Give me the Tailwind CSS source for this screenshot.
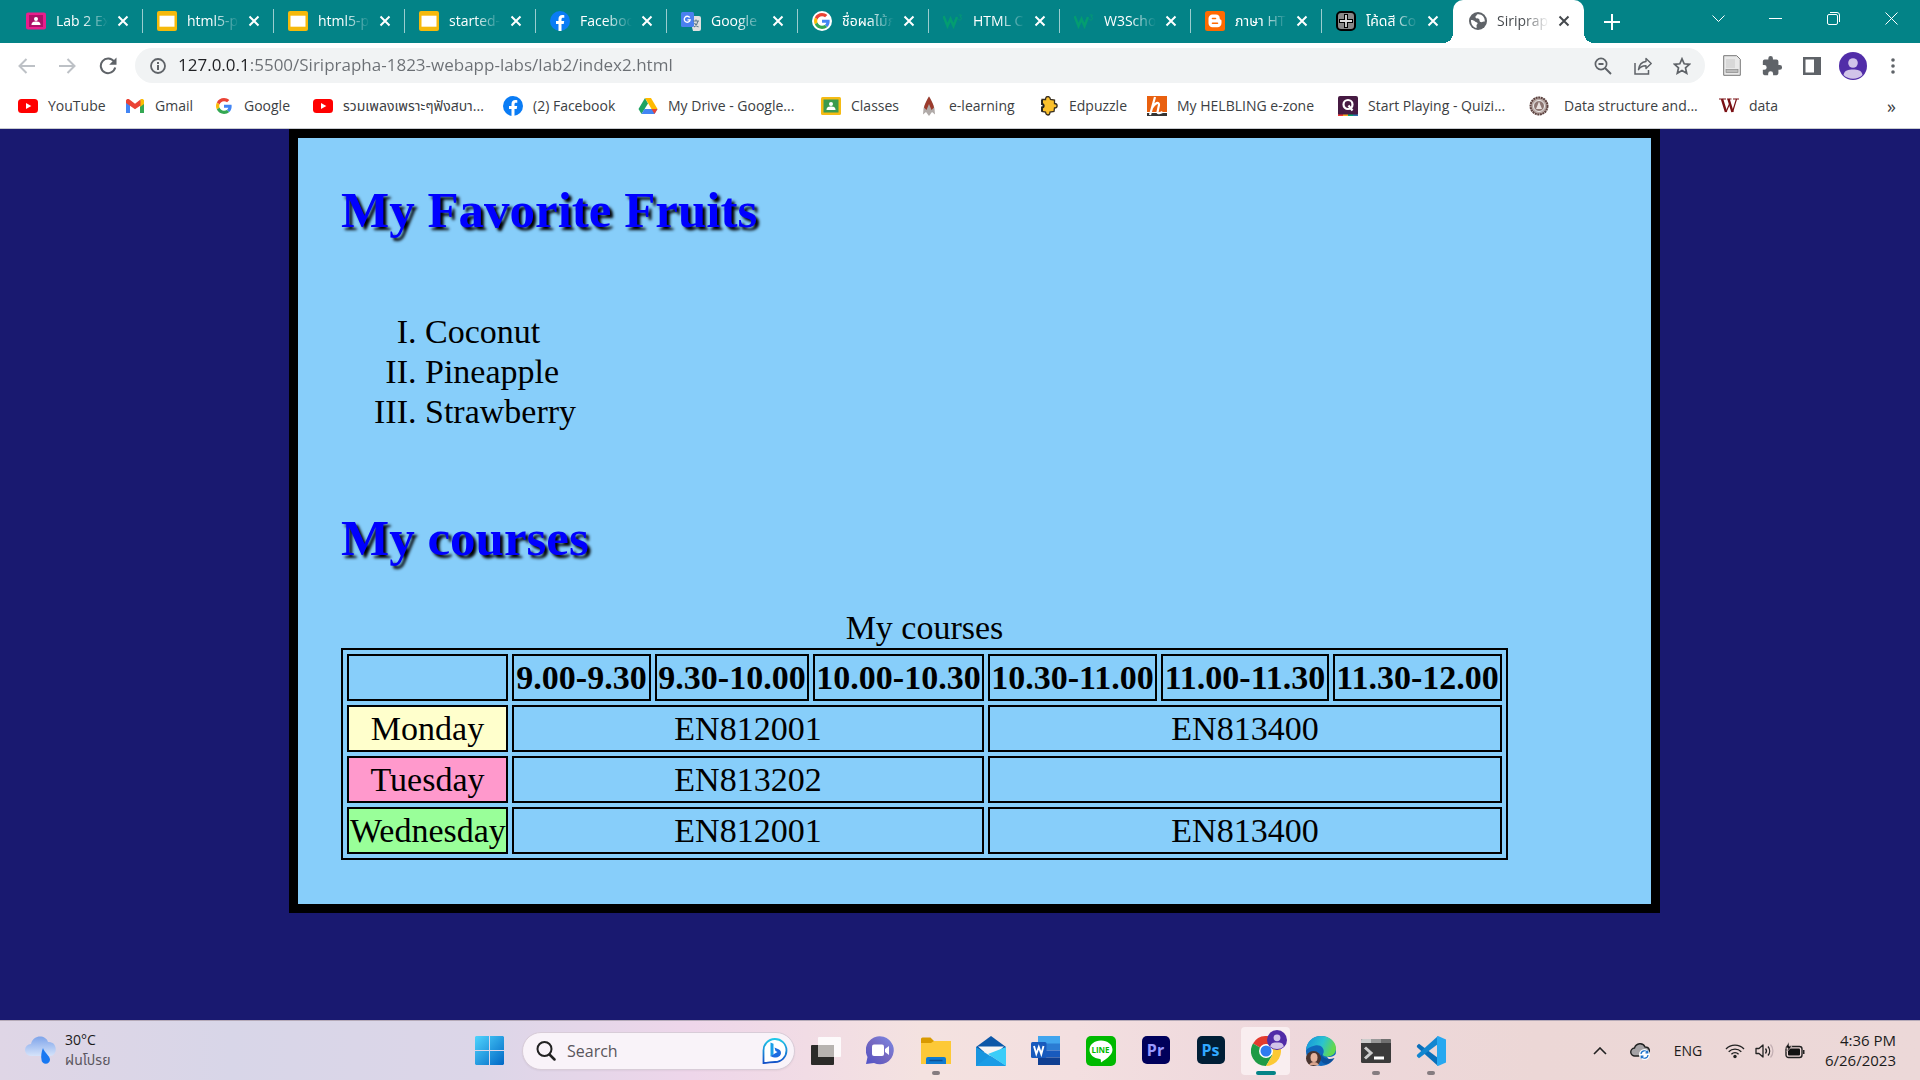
<!DOCTYPE html>
<html lang="th">
<head>
<meta charset="utf-8">
<title>Siriprapha</title>
<script src="https://cdn.jsdelivr.net/npm/@tailwindcss/browser@4"></script>
</head>
<body class="flex min-h-screen flex-col bg-[#191970] font-['Open_Sans','Noto_Sans_Thai',sans-serif] text-sm text-[#3c4043]">

<svg class="hidden" aria-hidden="true">
  <symbol id="x" viewBox="0 0 12 12"><path d="M1.5 1.5l9 9M10.500 1.500l-9 9" stroke="currentColor" stroke-width="2" fill="none"/></symbol>
  <symbol id="slides" viewBox="0 0 20 20"><rect width="20" height="20" rx="2" fill="#f5b90b"/><rect x="2.500" y="4.700" width="15" height="11" fill="#fff"/></symbol>
  <symbol id="fb" viewBox="0 0 20 20"><circle cx="10" cy="10" r="10" fill="#0a7cf5"/><path d="M8.500 20v-7H6v-3h2.500V8c0-2.600 1.500-4 3.800-4 .8 0 1.500.1 2 .2v2.500h-1.200c-1.200 0-1.600.7-1.600 1.500V10h2.700l-.5 3h-2.200v7z" fill="#fff"/></symbol>
  <symbol id="g" viewBox="0 0 48 48"><path fill="#EA4335" d="M24 9.500c3.500 0 6.700 1.200 9.200 3.600l6.900-6.900C35.900 2.400 30.500 0 24 0 14.600 0 6.500 5.400 2.600 13.200l8 6.200C12.400 13.700 17.700 9.500 24 9.500z"/><path fill="#4285F4" d="M47 24.500c0-1.600-.2-3.100-.4-4.500H24v9h12.900c-.6 3-2.200 5.500-4.700 7.200l7.700 6C44.400 38 47 31.800 47 24.500z"/><path fill="#FBBC05" d="M10.500 28.600c-.5-1.500-.8-3-.8-4.600s.3-3.100.8-4.600l-8-6.200C.9 16.500 0 20.100 0 24s.9 7.500 2.600 10.800z"/><path fill="#34A853" d="M24 48c6.500 0 11.900-2.100 15.900-5.800l-7.700-6c-2.200 1.500-4.900 2.300-8.200 2.300-6.300 0-11.600-4.200-13.500-9.900l-8 6.200C6.500 42.600 14.600 48 24 48z"/></symbol>
  <symbol id="w3" viewBox="0 0 20 20"><path d="M.500 5l4 10 3-7 3 7 3.500-9" stroke="#04a56a" stroke-width="2.500" fill="none" opacity=".75"/><path d="M15.500 4h3l-1.500 2c2 0 2 3-.2 3-.8 0-1.300-.4-1.500-.8" stroke="#04a56a" fill="none" opacity=".6"/></symbol>
  <symbol id="yt" viewBox="0 0 20 20"><rect y="3" width="20" height="14" rx="3.500" fill="#f00"/><path d="M8 7l5.300 3L8 13z" fill="#fff"/></symbol>
  <symbol id="person" viewBox="0 0 28 28"><circle cx="14" cy="14" r="14" fill="#512da8"/><circle cx="14" cy="11" r="4.800" fill="#d1c4e9"/><path d="M4.500 23c1-5 5-5.500 9.500-5.500s8.500.5 9.500 5.500a14 14 0 0 1-19 0z" fill="#d1c4e9"/></symbol>
</svg>

<header>
  <!-- tab strip -->
  <div class="flex h-[43px] items-center bg-[#038387] pl-3 text-white">
    <nav class="flex h-full shrink-0" aria-label="Tabs">
      <div class="flex w-[131px] items-center pb-px pl-[14px]"><svg class="size-5" viewBox="0 0 20 20"><rect y="1.500" width="20" height="17" rx="2" fill="#e91e8c"/><rect x="3" y="4" width="14" height="12" fill="#ad1068"/><circle cx="10" cy="8" r="2" fill="#fff"/><path d="M5.500 14c0-3 2-3.500 4.500-3.500s4.500.5 4.500 3.500z" fill="#fff"/></svg><a href="#" class="ml-[10px] w-[52px] overflow-hidden whitespace-nowrap mask-r-from-50%">Lab 2 Ex</a><button class="ml-[9px]" aria-label="Close"><svg class="size-3"><use href="#x"/></svg></button><span class="ml-auto h-6 w-px bg-white/60"></span></div>
      <div class="flex w-[131px] items-center pb-px pl-[14px]"><svg class="size-5"><use href="#slides"/></svg><a href="#" class="ml-[10px] w-[52px] overflow-hidden whitespace-nowrap mask-r-from-50%">html5-p</a><button class="ml-[9px]" aria-label="Close"><svg class="size-3"><use href="#x"/></svg></button><span class="ml-auto h-6 w-px bg-white/60"></span></div>
      <div class="flex w-[131px] items-center pb-px pl-[14px]"><svg class="size-5"><use href="#slides"/></svg><a href="#" class="ml-[10px] w-[52px] overflow-hidden whitespace-nowrap mask-r-from-50%">html5-p</a><button class="ml-[9px]" aria-label="Close"><svg class="size-3"><use href="#x"/></svg></button><span class="ml-auto h-6 w-px bg-white/60"></span></div>
      <div class="flex w-[131px] items-center pb-px pl-[14px]"><svg class="size-5"><use href="#slides"/></svg><a href="#" class="ml-[10px] w-[52px] overflow-hidden whitespace-nowrap mask-r-from-50%">started-</a><button class="ml-[9px]" aria-label="Close"><svg class="size-3"><use href="#x"/></svg></button><span class="ml-auto h-6 w-px bg-white/60"></span></div>
      <div class="flex w-[131px] items-center pb-px pl-[14px]"><svg class="size-5"><use href="#fb"/></svg><a href="#" class="ml-[10px] w-[52px] overflow-hidden whitespace-nowrap mask-r-from-50%">Faceboo</a><button class="ml-[9px]" aria-label="Close"><svg class="size-3"><use href="#x"/></svg></button><span class="ml-auto h-6 w-px bg-white/60"></span></div>
      <div class="flex w-[131px] items-center pb-px pl-[14px]"><svg class="size-5" viewBox="0 0 20 20"><path d="M8 5h10a2 2 0 0 1 2 2v11a2 2 0 0 1-2 2h-6z" fill="#e0e0e0"/><rect y="1" width="13" height="15" rx="1.500" fill="#4a80f0"/><path d="M8.700 6.500a3 3 0 1 0 .5 2.300H6.500" stroke="#fff" stroke-width="1.300" fill="none"/><path d="M12 10h6M15 8.500V10M17 10c-.5 3-2.500 5-4 6M13.500 12c1 2 2.500 3.500 4 4" stroke="#5f7a8c" stroke-width="1.200" fill="none"/></svg><a href="#" class="ml-[10px] w-[52px] overflow-hidden whitespace-nowrap mask-r-from-50%">Google</a><button class="ml-[9px]" aria-label="Close"><svg class="size-3"><use href="#x"/></svg></button><span class="ml-auto h-6 w-px bg-white/60"></span></div>
      <div class="flex w-[131px] items-center pb-px pl-[14px]"><span class="flex size-5 items-center justify-center rounded-full bg-white"><svg class="size-4"><use href="#g"/></svg></span><a href="#" class="ml-[10px] w-[52px] overflow-hidden whitespace-nowrap mask-r-from-50%">ชื่อผลไม้ภ</a><button class="ml-[9px]" aria-label="Close"><svg class="size-3"><use href="#x"/></svg></button><span class="ml-auto h-6 w-px bg-white/60"></span></div>
      <div class="flex w-[131px] items-center pb-px pl-[14px]"><svg class="size-5"><use href="#w3"/></svg><a href="#" class="ml-[10px] w-[52px] overflow-hidden whitespace-nowrap mask-r-from-50%">HTML C</a><button class="ml-[9px]" aria-label="Close"><svg class="size-3"><use href="#x"/></svg></button><span class="ml-auto h-6 w-px bg-white/60"></span></div>
      <div class="flex w-[131px] items-center pb-px pl-[14px]"><svg class="size-5"><use href="#w3"/></svg><a href="#" class="ml-[10px] w-[52px] overflow-hidden whitespace-nowrap mask-r-from-50%">W3Scho</a><button class="ml-[9px]" aria-label="Close"><svg class="size-3"><use href="#x"/></svg></button><span class="ml-auto h-6 w-px bg-white/60"></span></div>
      <div class="flex w-[131px] items-center pb-px pl-[14px]"><svg class="size-5" viewBox="0 0 20 20"><rect width="20" height="20" rx="2.500" fill="#ff6a00"/><path d="M7.500 3.500H11c2.300 0 3.700 1.500 3.700 3.500 0 1.500.4 1.500 1.300 1.800.4.200.5.500.5 1V12c0 2.500-1.600 4.200-4 4.200H7.500c-2.300 0-4-1.700-4-4V7.500c0-2.300 1.700-4 4-4z" fill="#fff"/><path d="M7.500 7.500h3M7.500 12.300h5" stroke="#ff6a00" stroke-width="1.600" stroke-linecap="round"/></svg><a href="#" class="ml-[10px] w-[52px] overflow-hidden whitespace-nowrap mask-r-from-50%">ภาษา HT</a><button class="ml-[9px]" aria-label="Close"><svg class="size-3"><use href="#x"/></svg></button><span class="ml-auto h-6 w-px bg-white/60"></span></div>
      <div class="flex w-[131px] items-center pb-px pl-[14px]"><svg class="size-5" viewBox="0 0 20 20"><rect x="1" y="1" width="18" height="18" rx="4" fill="#888" stroke="#000" stroke-width="2"/><path d="M10 3v14M3 10h14" stroke="#000" stroke-width="4"/><path d="M10 4v12M4 10h12" stroke="#ddd" stroke-width="1.800"/></svg><a href="#" class="ml-[10px] w-[52px] overflow-hidden whitespace-nowrap mask-r-from-50%">โค้ดสี Co</a><button class="ml-[9px]" aria-label="Close"><svg class="size-3"><use href="#x"/></svg></button></div>
      <div class="relative flex w-[131px] items-center rounded-t-[10px] bg-white pb-px pl-4 text-[#45494d]">
        <span class="absolute bottom-0 -left-[10px] size-[10px] bg-[radial-gradient(circle_at_0_0,transparent_10px,#fff_10px)]"></span>
        <span class="absolute -right-[10px] bottom-0 size-[10px] bg-[radial-gradient(circle_at_100%_0,transparent_10px,#fff_10px)]"></span>
        <svg class="size-[18px]" viewBox="0 0 18 18"><circle cx="9" cy="9" r="9" fill="#5f6368"/><path d="M2 8c2 0 3 .5 4 1.500s2 .5 2.500 1.500-1 1.500-1 2.500.5 1.500 0 2.500C4 15.500 1.800 12 2 8zM8 2.500c-.5 1.500-2 1.500-1.500 3s2.500.5 3.500 1.500 0 2.500 1.500 3 2.500-.5 4.300-.5C16 5 12.500 1.500 8 2.500z" fill="#fff"/></svg>
        <a href="#" class="ml-[10px] w-[52px] overflow-hidden whitespace-nowrap mask-r-from-50%">Siriprap</a><button class="ml-[9px]" aria-label="Close"><svg class="size-3"><use href="#x"/></svg></button>
      </div>
    </nav>
    <button class="ml-5" aria-label="New tab"><svg class="size-4" viewBox="0 0 16 16"><path d="M8 0v16M0 8h16" stroke="#fff" stroke-width="2"/></svg></button>
    <div class="mb-[6px] ml-auto flex h-8 shrink-0 text-white">
      <button class="flex w-[57px] items-center justify-center" aria-label="Search tabs"><svg class="h-[7px] w-[13px]" viewBox="0 0 13 7"><path d="M.500.500l6 6 6-6" stroke="#fff" fill="none"/></svg></button>
      <button class="flex w-[57px] items-center justify-center" aria-label="Minimize"><svg class="h-px w-[13px]"><rect width="13" height="1" fill="#fff"/></svg></button>
      <button class="flex w-[58px] items-center justify-center" aria-label="Restore"><svg class="size-[13px]" viewBox="0 0 13 13"><rect x=".500" y="2.500" width="10" height="10" rx="1.500" stroke="#fff" fill="none"/><path d="M3 .500h7a2.500 2.500 0 0 1 2.500 2.500v7" stroke="#fff" fill="none"/></svg></button>
      <button class="flex w-[58px] items-center justify-center" aria-label="Close window"><svg class="size-[13px]" viewBox="0 0 13 13"><path d="M.500.500l12 12M12.500.500l-12 12" stroke="#fff"/></svg></button>
    </div>
  </div>

  <!-- toolbar -->
  <div class="flex h-[45px] items-center bg-white text-[#5f6368]">
    <div class="flex w-[135px] shrink-0 items-center pl-[7px]">
      <button class="flex w-10 justify-center" aria-label="Back"><svg class="h-4 w-[18px]" viewBox="0 0 18 16"><path d="M17 8H2M8.500 1l-7 7 7 7" stroke="#bdc1c6" stroke-width="2" fill="none"/></svg></button>
      <button class="flex w-10 justify-center" aria-label="Forward"><svg class="h-4 w-[18px]" viewBox="0 0 18 16"><path d="M1 8h15M9.500 1l7 7-7 7" stroke="#bdc1c6" stroke-width="2" fill="none"/></svg></button>
      <button class="flex w-[41px] justify-center" aria-label="Reload"><svg class="size-[18px]" viewBox="0 0 18 18"><path d="M15 4.500A7.300 7.300 0 1 0 16.200 10.500" stroke="#5f6368" stroke-width="2" fill="none"/><path d="M17.500.500v7.300h-7.300z" fill="#5f6368"/></svg></button>
    </div>
    <div class="flex h-[35px] flex-1 items-center rounded-full bg-[#f1f3f4] pr-[10px] pl-[15px]">
      <svg class="size-4" viewBox="0 0 16 16"><circle cx="8" cy="8" r="7" stroke="#5f6368" stroke-width="1.800" fill="none"/><path d="M8 7v5M8 4v2" stroke="#5f6368" stroke-width="2"/></svg>
      <input aria-label="Address" value="127.0.0.1:5500/Siriprapha-1823-webapp-labs/lab2/index2.html" class="ml-3 flex-1 bg-[linear-gradient(90deg,#202124_71px,#6b6f74_71px)] bg-clip-text text-[17px] text-transparent outline-none">
      <button class="flex w-10 justify-center" aria-label="Zoom"><svg class="size-[18px]" viewBox="0 0 18 18"><circle cx="7" cy="7" r="5.600" stroke="#5f6368" stroke-width="1.700" fill="none"/><path d="M4.500 7h5M11 11l6 6" stroke="#5f6368" stroke-width="1.900"/></svg></button>
      <button class="flex w-10 justify-center" aria-label="Share"><svg class="size-[18px]" viewBox="0 0 18 18"><path d="M1 6v11h13.500v-4" stroke="#5f6368" stroke-width="1.500" fill="none"/><path d="M12 1.500l5.200 5-5.200 5V8.700c-3.500 0-6 1-7.500 4C5 8.500 7.500 5 12 4.500z" stroke="#5f6368" stroke-width="1.400" fill="none" stroke-linejoin="round"/></svg></button>
      <button class="ml-[6px] flex w-[26px] justify-center" aria-label="Bookmark"><svg class="size-[18px]" viewBox="0 0 18 18"><path d="M9 1.800l2.200 5 5.300.5-4 3.600 1.200 5.300L9 13.400l-4.700 2.800 1.200-5.300-4-3.600 5.300-.5z" stroke="#5f6368" stroke-width="1.700" fill="none"/></svg></button>
    </div>
    <div class="flex shrink-0 items-center pr-2 pl-[7px]">
      <button class="flex w-10 justify-center" aria-label="Document extension"><svg class="h-[21px] w-[18px]" viewBox="0 0 18 21"><path d="M.700.700h13l3.600 3.600v16H.700z" fill="#e9e9e9" stroke="#777"/><path d="M3 4h9v9H3z" fill="#d8d8d8"/><rect x="3" y="14.500" width="12" height="3" fill="#bbb" stroke="#888" stroke-width=".700"/></svg></button>
      <button class="flex w-10 justify-center" aria-label="Extensions"><svg class="size-[22px]" viewBox="0 0 24 24"><path fill="#5f6368" d="M20.500 11H19V7a2 2 0 0 0-2-2h-4V3.500a2.500 2.500 0 0 0-5 0V5H4a2 2 0 0 0-2 2v3.800h1.500a2.700 2.700 0 0 1 0 5.400H2V20c0 1.100.9 2 2 2h3.800v-1.500a2.700 2.700 0 0 1 5.400 0V22H17a2 2 0 0 0 2-2v-4h1.500a2.500 2.500 0 0 0 0-5z"/></svg></button>
      <button class="flex w-10 justify-center" aria-label="Side panel"><svg class="size-[18px]" viewBox="0 0 18 18"><path d="M0 0h18v18H0zM2.500 2.500v13H11v-13z" fill="#5f6368" fill-rule="evenodd"/></svg></button>
      <button class="flex w-[42px] justify-center" aria-label="Profile"><svg class="size-7"><use href="#person"/></svg></button>
      <button class="flex w-[38px] justify-center" aria-label="Menu"><svg class="h-4 w-1" viewBox="0 0 4 16"><circle cx="2" cy="2" r="1.800" fill="#5f6368"/><circle cx="2" cy="8" r="1.800" fill="#5f6368"/><circle cx="2" cy="14" r="1.800" fill="#5f6368"/></svg></button>
    </div>
  </div>

  <!-- bookmarks -->
  <nav aria-label="Bookmarks" class="grid h-[41px] grid-cols-[107px_89px_99px_190px_135px_183px_98px_120px_108px_191px_191px_190px_1fr_auto] items-center border-b border-[#c8cbd0] bg-white pr-6 pb-1 pl-[18px] whitespace-nowrap">
    <a href="#" class="flex items-center gap-[10px]"><svg class="size-5"><use href="#yt"/></svg>YouTube</a>
    <a href="#" class="flex items-center gap-[10px]"><svg class="size-5" viewBox="0 0 20 20"><path d="M1 4v13h4V8z" fill="#4285f4"/><path d="M19 4v13h-4V8z" fill="#34a853"/><path d="M15 5.500V11l4-3V5c0-2-2.200-2.500-3.500-1.500z" fill="#fbbc04"/><path d="M1 5c0-2 2.200-2.500 3.500-1.500L10 7.700l5.500-4.200V9.500L10 13.300 1 7z" fill="#ea4335"/></svg>Gmail</a>
    <a href="#" class="flex items-center gap-[10px]"><span class="flex size-5 items-center justify-center"><svg class="size-4"><use href="#g"/></svg></span>Google</a>
    <a href="#" class="flex items-center gap-[10px]"><svg class="size-5"><use href="#yt"/></svg>รวมเพลงเพราะๆฟังสบา...</a>
    <a href="#" class="flex items-center gap-[10px]"><svg class="size-5"><use href="#fb"/></svg>(2) Facebook</a>
    <a href="#" class="flex items-center gap-[10px]"><svg class="size-5" viewBox="0 0 20 20"><path d="M7 2l3 5.500L3.500 18 .500 13z" fill="#1ea362"/><path d="M7 2h6l6.500 11h-6z" fill="#ffba00"/><path d="M6.500 13h13l-3 5h-13z" fill="#4285f4"/><path d="M13.500 13h6l-3 5z" fill="#ea4335"/></svg>My Drive - Google...</a>
    <a href="#" class="flex items-center gap-[10px]"><svg class="size-5" viewBox="0 0 20 20"><rect y="1" width="20" height="18" rx="1.500" fill="#f5bb14"/><rect x="2.500" y="3.500" width="15" height="13" fill="#3c9a4e"/><circle cx="10" cy="8" r="2" fill="#fff"/><path d="M5.500 14c0-3 2-3.500 4.500-3.500s4.500.5 4.500 3.500z" fill="#fff"/></svg>Classes</a>
    <a href="#" class="flex items-center gap-[10px]"><svg class="size-5" viewBox="0 0 20 20"><path d="M10 .500c2 3 4.500 8 5.500 12l.500 6-3-2.500-3 4-3-4-3 2.500.500-6c1-4 3.500-9 5.500-12z" fill="#b0aaa8"/><path d="M10 .500c2 3 4 7 5 11L12.500 14 10 8l-2.500 6L5 11.500C6 7.500 8 3.500 10 .500z" fill="#9c3b2c"/></svg>e-learning</a>
    <a href="#" class="flex items-center gap-[10px]"><svg class="size-5" viewBox="0 0 20 20"><path d="M3 3.500l3.500 0c0-4 4.500-4 5 0l4 .500 0 3.500c3.500 0 3.500 4.500 0 4.500l-.500 3.500-4 .500c0 4-4 4-4.500 0L3 15.500v-4c2 0 2-3.500 0-3.500z" fill="#fbc12d" stroke="#3a3020" stroke-width="1.300"/><path d="M3 4v4c2.300 0 2.300 3.500 0 3.500v4" stroke="#222" stroke-width="1.800" fill="none"/></svg>Edpuzzle</a>
    <a href="#" class="flex items-center gap-[10px]"><svg class="size-5" viewBox="0 0 20 20"><path d="M0 0h20v16H0z" fill="#e9600f"/><path d="M0 17h20v3H0z" fill="#333"/><path d="M8 1L3 19M5 12c3-5 7-7 7-3l-1.500 7c0 2 3 1 5 0" stroke="#fff" stroke-width="2.200" fill="none"/></svg>My HELBLING e-zone</a>
    <a href="#" class="flex items-center gap-[10px]"><svg class="size-5" viewBox="0 0 20 20"><rect width="20" height="20" rx="2" fill="#461a42"/><circle cx="10" cy="8.500" r="4.500" stroke="#fff" stroke-width="2.200" fill="none"/><path d="M10.500 9.500l4 5" stroke="#fff" stroke-width="2.200"/><path d="M0 18.500h5V20H0z" fill="#e33"/><path d="M5 18.500h5V20H5z" fill="#f9a825"/><path d="M10 18.500h5V20h-5z" fill="#00a76d"/><path d="M15 18.500h5V20h-5z" fill="#2d70ae"/></svg>Start Playing - Quizi...</a>
    <a href="#" class="flex items-center gap-[15px]"><svg class="size-5" viewBox="0 0 20 20"><circle cx="10" cy="10" r="8.500" fill="#b8a8a4" stroke="#5d4340" stroke-width="2" stroke-dasharray="2 .6"/><circle cx="10" cy="10" r="5.500" fill="#8d7672" stroke="#eee"/><path d="M10 5.500l3 7.500H7z" fill="#e8e0de"/></svg>Data structure and...</a>
    <a href="#" class="flex items-center gap-[10px]"><svg class="size-5" viewBox="0 0 20 20"><path d="M0 3h7M8 3h4.500M14 3h6" stroke="#7a1014" stroke-width="1.200"/><path d="M3 3l4 13M9.500 3l4 13" stroke="#7a1014" stroke-width="2.500"/><path d="M7 16l4-9M13.500 16l4-13" stroke="#7a1014" stroke-width="1.200"/></svg>data</a>
    <button class="text-lg leading-5" aria-label="More bookmarks">»</button>
  </nav>
</header>

<main class="flex-1 font-['Liberation_Serif',serif] text-[34px] leading-10 text-black">
  <article class="mr-[260px] ml-[289px] border-9 border-black bg-[#87cefa] px-[43px] py-11">
    <h1 class="text-[51px] leading-14 font-bold text-[#00f] [text-shadow:3px_3px_3px_#000]">My Favorite Fruits</h1>
    <ol class="mt-[74px] list-[upper-roman] pl-21">
      <li>Coconut</li>
      <li>Pineapple</li>
      <li>Strawberry</li>
    </ol>
    <h1 class="mt-[78px] text-[51px] leading-14 font-bold text-[#00f] [text-shadow:3px_3px_3px_#000]">My courses</h1>
    <table class="mt-[42px] w-[1167px] table-fixed border-separate border-spacing-1 border-2 border-black text-center whitespace-nowrap">
      <caption>My courses</caption>
      <colgroup><col class="w-[161px]"><col class="w-[139px]"><col class="w-[154px]"><col class="w-[171px]"><col class="w-[169px]"><col class="w-[168px]"><col class="w-[169px]"></colgroup>
      <thead>
        <tr class="h-[47px]"><th class="border-2 border-black p-px"></th><th class="border-2 border-black p-px">9.00-9.30</th><th class="border-2 border-black p-px">9.30-10.00</th><th class="border-2 border-black p-px">10.00-10.30</th><th class="border-2 border-black p-px">10.30-11.00</th><th class="border-2 border-black p-px">11.00-11.30</th><th class="border-2 border-black p-px">11.30-12.00</th></tr>
      </thead>
      <tbody>
        <tr class="h-[47px]"><td class="border-2 border-black bg-[#ffffcc] p-px">Monday</td><td colspan="3" class="border-2 border-black p-px">EN812001</td><td colspan="3" class="border-2 border-black p-px">EN813400</td></tr>
        <tr class="h-[47px]"><td class="border-2 border-black bg-[#ff99cc] p-px">Tuesday</td><td colspan="3" class="border-2 border-black p-px">EN813202</td><td colspan="3" class="border-2 border-black p-px"></td></tr>
        <tr class="h-[47px]"><td class="border-2 border-black bg-[#99ff99] p-px">Wednesday</td><td colspan="3" class="border-2 border-black p-px">EN812001</td><td colspan="3" class="border-2 border-black p-px">EN813400</td></tr>
      </tbody>
    </table>
  </article>
</main>

<!-- taskbar -->
<footer class="grid h-[60px] grid-cols-[1fr_auto_1fr] items-center border-t border-[#b5aab8] bg-[linear-gradient(90deg,#dfd6e6_0%,#d8d6e8_12%,#dcd6e8_25%,#eed6ea_36%,#f4e2e0_48%,#f3dfe0_56%,#eed8dc_66%,#ecd7d6_80%,#ecd8d8_100%)] text-[#1b1b1b]">
  <button class="flex items-center gap-2 pb-px pl-[25px] text-left leading-5" aria-label="Weather">
    <svg class="h-7 w-8" viewBox="0 0 32 28"><defs><linearGradient id="cl" x2="0" y2="1"><stop stop-color="#7ea4ea"/><stop offset="1" stop-color="#d5e3fa"/></linearGradient></defs><path d="M6 20a6 6 0 0 1 0-12c2.500-10 15-9 17-2 10-1 10 14 2 14z" fill="url(#cl)"/><path d="M18 12c1 4 7 8 7 11.500a4 4 0 0 1-8.500 0c-.8-3 0-8 1.500-11.500z" fill="#1878f2"/></svg>
    <span>30°C<br><span class="text-[#5b5660]">ฝนโปรย</span></span>
  </button>

  <div class="flex h-full items-center">
    <button class="flex w-[55px] justify-center" aria-label="Start"><svg class="size-[29px]" viewBox="0 0 29 29"><defs><linearGradient id="wn" x2="1" y2="1"><stop stop-color="#4fd4fd"/><stop offset="1" stop-color="#0067c5"/></linearGradient></defs><path d="M1 0h13v14H0V1zM15 0h13l1 1v13H15zM0 15h14v14H1l-1-1zM15 15h14v13l-1 1H15z" fill="url(#wn)"/></svg></button>
    <label class="mr-[3px] ml-[5px] flex h-[38px] w-[273px] items-center rounded-full border border-[#d8ccd8] bg-[#f9f3f9] pr-[6px] pl-[13px] shadow-xs">
      <svg class="size-5" viewBox="0 0 20 20"><circle cx="8.500" cy="8" r="7" stroke="#222" stroke-width="2" fill="none"/><path d="M13.500 13.500l5 5" stroke="#222" stroke-width="2.500" stroke-linecap="round"/></svg>
      <input aria-label="Search" placeholder="Search" class="ml-[11px] w-0 flex-1 text-base placeholder-[#5a565c] outline-none">
      <svg class="size-[26px]" viewBox="0 0 26 26"><defs><linearGradient id="bg" x2="0" y2="1"><stop stop-color="#20c8e8"/><stop offset="1" stop-color="#1450c8"/></linearGradient></defs><path d="M1.500 25V13A11.500 11.500 0 1 1 13 24c-4 0-7 1-11.500 1z" fill="#fff" stroke="url(#bg)" stroke-width="1.800"/><path d="M8.500 4.500l3 1.300v10.500l-3 2.200z" fill="#1aa0e8"/><path d="M12.500 9.500l4.500 2c4 2.500 1.500 8-3 8-2 0-4-.5-5.500-1.500l7-4-2-1z" fill="#1a6ce0"/></svg>
    </label>
    <button class="flex w-[55px] justify-center" aria-label="Task view"><svg class="h-7 w-[30px]" viewBox="0 0 30 28"><rect y="8" width="23" height="20" rx="1" fill="#2b2b29"/><rect x="7" width="23" height="20" rx="1" fill="#fff" opacity=".85"/><path d="M7 8h16v12H7z" fill="#b7b3b0"/></svg></button>
    <button class="flex w-[55px] justify-center" aria-label="Chat"><svg class="size-[29px]" viewBox="0 0 29 29"><defs><linearGradient id="ch" x1="1" x2="0" y2="1"><stop stop-color="#7a8ae8"/><stop offset=".500" stop-color="#7568c0"/><stop offset="1" stop-color="#4f52c8"/></linearGradient></defs><path d="M0 28l1.500-7A14 14 0 1 1 8 27z" fill="url(#ch)"/><rect x="6" y="8.500" width="12" height="11.500" rx="2" fill="#fff"/><path d="M19 13l4-3v9l-4-3z" fill="#fff"/></svg></button>
    <button class="relative flex w-[55px] justify-center" aria-label="File Explorer"><svg class="h-[28px] w-[30px]" viewBox="0 0 30 28"><path d="M0 2a1.500 1.500 0 0 1 1.500-1.500h8L13 4H30v5H0z" fill="#d99a00"/><path d="M0 6h10l3-2h17v23H0z" fill="#fdc937"/><path d="M5 27v-5a2 2 0 0 1 2-2h16a2 2 0 0 1 2 2v5z" fill="#0f7bd0"/><path d="M8.500 23.500h13" stroke="#0a4f94" stroke-width="1.500"/></svg><span class="absolute -bottom-[10px] h-1 w-2 rounded-full bg-[#857c80]"></span></button>
    <button class="flex w-[55px] justify-center" aria-label="Mail"><svg class="size-[30px]" viewBox="0 0 30 30"><path d="M0 11L15 0l15 11v5H0z" fill="#0b57a8"/><path d="M2 10.500h26L15 22z" fill="#f6f4f4"/><path d="M0 11l30 19H0z" fill="#1895df"/><path d="M30 11v19L12 18z" fill="#3ccdf8"/><path d="M0 30l14-10.500L30 30z" fill="#1a9ce6"/></svg></button>
    <button class="flex w-[55px] justify-center" aria-label="Word"><svg class="size-[29px]" viewBox="0 0 29 29"><path d="M7 0h22v8H7z" fill="#41a5ee"/><path d="M7 7.500h22v7H7z" fill="#2b7cd3"/><path d="M7 14.500h22v7H7z" fill="#185abd"/><path d="M7 21.500h22V29H7z" fill="#103f91"/><rect y="6" width="15.500" height="16" rx="1.500" fill="#185abd"/><path d="M3 10l2.300 8 2.500-7 2.500 7 2.200-8" stroke="#fff" stroke-width="1.900" fill="none"/></svg></button>
    <button class="relative flex w-[55px] justify-center" aria-label="LINE"><svg class="size-[30px]" viewBox="0 0 30 30"><rect width="30" height="30" rx="5" fill="#00b900"/><path d="M15 4.500c6.500 0 11.500 4 11.500 9.300 0 4.200-4.500 8.400-11.500 12.700-.5-1.500.5-3.200-1-3.500C7.500 22.500 3.500 18.500 3.500 13.800 3.500 8.500 8.500 4.500 15 4.500z" fill="#fff"/></svg><span class="absolute top-[9px] text-[8px] leading-[10px] font-bold text-[#00b900]">LINE</span></button>
    <button class="flex w-[55px] justify-center"><span class="mb-[2px] flex size-7 items-center justify-center rounded-[5px] bg-[#00005b] text-base font-bold text-[#9999ff]">Pr</span></button>
    <button class="flex w-[55px] justify-center"><span class="mb-[2px] flex size-7 items-center justify-center rounded-[5px] bg-[#001e36] text-base font-bold text-[#31a8ff]">Ps</span></button>
    <button class="relative mx-[3px] flex h-12 w-[49px] items-center justify-center rounded-[4px] bg-[#f9eef0]" aria-label="Chrome"><svg class="size-[30px]" viewBox="0 0 30 30"><path d="M15 15L2 7.500A15 15 0 0 1 28 7.500z" fill="#e33b2e"/><path d="M15 15L2 7.500A15 15 0 0 0 15 30l6.500-11z" fill="#1e9b46"/><path d="M15 8h13.300A15 15 0 0 1 15 30l6.500-11z" fill="#fcc934"/><circle cx="15" cy="15" r="7" fill="#fff"/><circle cx="15" cy="15" r="5.500" fill="#2e7bf0"/></svg><svg class="absolute top-[3px] right-[3px] size-5"><use href="#person"/></svg><span class="absolute bottom-0 h-1 w-5 rounded-full bg-[#038387]"></span></button>
    <button class="flex w-[55px] justify-center" aria-label="Edge"><svg class="size-[30px]" viewBox="0 0 30 30"><defs><linearGradient id="ed" x2="1" y2=".3"><stop stop-color="#1490dc"/><stop offset=".600" stop-color="#2bc3d0"/><stop offset="1" stop-color="#62d84e"/></linearGradient></defs><circle cx="15" cy="15" r="15" fill="#1169bd"/><path d="M18 17c2 5 8 5 12 1v6l-5 2z" fill="#f0dadc"/><path d="M0 14C1 5 7 0 15 0c9 0 15 6 15 12.500 0 5-4 8-8.500 8-4 0-5.500-1.500-4-3.500C19 12 14 8 9 9.500 4 10.500 1 13 0 14z" fill="url(#ed)"/><path d="M15 18c2 5 8 6 13.500 4-1.500 3-4 5-7.500 6-5 0-8-5-6-10z" fill="#0b4f9c"/><circle cx="7.500" cy="22.500" r="7.500" fill="#4a3530"/><ellipse cx="8" cy="21.500" rx="3.500" ry="4.500" fill="#e5b49d"/><path d="M3 29c2-4 8-4 10 0z" fill="#d9a48c"/></svg></button>
    <button class="relative flex w-[55px] justify-center" aria-label="Terminal"><svg class="h-6 w-[30px]" viewBox="0 0 30 24"><rect width="30" height="24" rx="1.500" fill="#3b3b3b"/><path d="M0 4V1.500A1.500 1.500 0 0 1 1.500 0H10v4z" fill="#ccc"/><path d="M10 0h10v4H10z" fill="#999"/><path d="M20 0h8.500A1.500 1.500 0 0 1 30 1.500V4H20z" fill="#707070"/><path d="M4 8.500l6 5.500-6 5.500" stroke="#ccc" stroke-width="3" fill="none"/><path d="M13 19h10" stroke="#fff" stroke-width="3"/></svg><span class="absolute -bottom-3 h-1 w-2 rounded-full bg-[#857c80]"></span></button>
    <button class="relative flex w-[55px] justify-center" aria-label="Visual Studio Code"><svg class="size-[30px]" viewBox="0 0 30 30"><path d="M1 9.500l2-1.800L22 22v8L.800 11z" fill="#0a6fba"/><path d="M1 20.500l2 1.800L22 8V0L.800 19z" fill="#1286d0"/><path d="M22 0l8 3.500v23L22 30l-1-1V1z" fill="#27a8f0"/></svg><span class="absolute -bottom-[9px] h-1 w-2 rounded-full bg-[#857c80]"></span></button>
  </div>

  <div class="flex items-center justify-end pr-6 text-[15px]">
    <button class="flex w-10 justify-center" aria-label="Hidden icons"><svg class="h-2 w-[14px]" viewBox="0 0 14 8"><path d="M1 7l6-6 6 6" stroke="#222" stroke-width="1.600" fill="none"/></svg></button>
    <button class="flex w-10 justify-center" aria-label="OneDrive"><svg class="h-[18px] w-5" viewBox="0 0 20 18"><path d="M5 14a4 4 0 0 1-.5-8C6 1 13 0 15 5c3 0 4.500 2 4.500 4.500S17 14 15 14z" fill="#a5a2a5" stroke="#222" stroke-width="1.400"/><circle cx="14.500" cy="12.500" r="5.500" fill="#fff"/><path d="M11 12a3.500 3.500 0 0 1 6.500-1.500M18 13a3.500 3.500 0 0 1-6.500 1.500M17.800 8.500v2.300h-2.300M11.200 16.500v-2.300h2.300" stroke="#1a6fc9" stroke-width="1.200" fill="none"/></svg></button>
    <button class="flex w-14 justify-center text-sm">ENG</button>
    <button class="flex w-[109px] items-center gap-[10px] pl-[9px]" aria-label="Network, volume and battery">
      <svg class="h-4 w-5" viewBox="0 0 20 16"><path d="M1 6a12.500 12.500 0 0 1 18 0M3.700 8.700a9 9 0 0 1 12.600 0M6.400 11.200a5.300 5.300 0 0 1 7.200 0" stroke="#222" stroke-width="1.400" fill="none"/><circle cx="10" cy="13.500" r="1.700" fill="#222"/></svg>
      <svg class="h-4 w-5" viewBox="0 0 20 16"><path d="M1 5.500h3L8 2v12l-4-3.500H1z" stroke="#222" stroke-width="1.300" fill="none" stroke-linejoin="round"/><path d="M10.500 5.500a4 4 0 0 1 0 5M13 3.500a7 7 0 0 1 0 9" stroke="#222" stroke-width="1.300" fill="none"/><path d="M15.500 1.500a10 10 0 0 1 0 13" stroke="#c4b0b4" stroke-width="1.300" fill="none"/></svg>
      <svg class="h-[17px] w-5" viewBox="0 0 20 17"><rect x="1" y="4.500" width="16" height="11" rx="2.500" stroke="#222" stroke-width="1.400" fill="none"/><rect x="3" y="6.500" width="12" height="7" rx="1" fill="#111"/><path d="M18 8h1.500v4H18z" fill="#222"/><path d="M4 0L0 6h3l-1 4 5-6H4z" fill="#111" stroke="#ecd8d8" stroke-width=".600"/></svg>
    </button>
    <time class="pb-[2px] text-right leading-5">4:36 PM<br>6/26/2023</time>
  </div>
</footer>
</body>
</html>
